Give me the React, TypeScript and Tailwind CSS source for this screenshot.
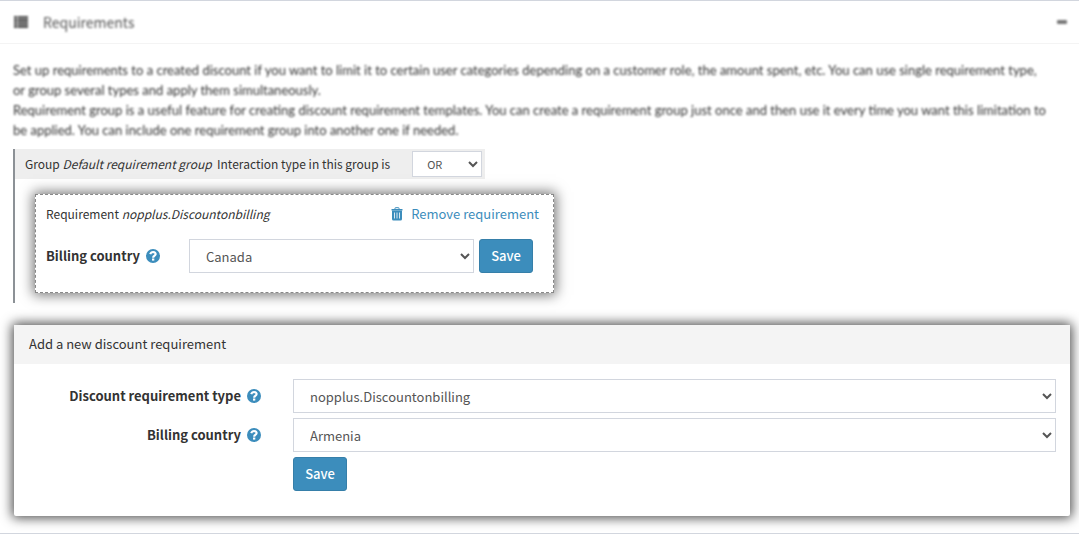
import { useState } from 'react';
import type { ReactNode } from 'react';

const COUNTRIES = ['Armenia', 'Canada', 'Germany', 'United States'];
const REQUIREMENT_TYPES = ['nopplus.Discountonbilling'];

interface SelectProps {
  id: string;
  value: string;
  options: string[];
  onChange: (value: string) => void;
  className: string;
}

function Select({ id, value, options, onChange, className }: SelectProps) {
  return (
    <select
      id={id}
      value={value}
      onChange={(e) => onChange(e.target.value)}
      className={`border border-[#d2d6de] bg-white text-[#555] ${className}`}
    >
      {options.map((option) => (
        <option key={option} value={option}>{option}</option>
      ))}
    </select>
  );
}

function SaveButton() {
  return (
    <button
      type="button"
      className="h-[34px] w-[54px] shrink-0 rounded-[3px] border border-[#367fa9] bg-[#3c8dbc] text-[13px] font-medium text-white"
    >
      Save
    </button>
  );
}

function HelpIcon() {
  return (
    <svg viewBox="0 0 14 14" className="size-3.5 text-[#3c8dbc]" aria-hidden="true">
      <circle cx="7" cy="7" r="7" fill="currentColor" />
      <path d="M4.2 5.2Q5 3 7.1 3 9.600 3.200 9.600 5.100 9.600 6.200 8.200 6.900 7.200 7.400 7.200 8.700" fill="none" stroke="#fff" strokeWidth="2.2" />
      <path d="M6 9.500h2.300v2.100H6z" fill="#fff" />
    </svg>
  );
}

function FieldLabel({ htmlFor, children }: { htmlFor: string; children: ReactNode }) {
  return (
    <label htmlFor={htmlFor} className="flex items-center gap-1.5 font-bold">
      {children}
      <HelpIcon />
    </label>
  );
}

function ListIcon() {
  return (
    <svg viewBox="0 0 14 12" className="h-3 w-3.5 blur-[1px]" aria-hidden="true">
      <path
        d="M0 0h3v2.6H0zM0 3.1h3v2.6H0zM0 6.2h3v2.6H0zM0 9.3h3V12H0zM3.6 0H14v2.6H3.6zM3.6 3.1H14v2.6H3.6zM3.6 6.2H14v2.6H3.6zM3.6 9.3H14V12H3.6z"
        fill="currentColor"
      />
    </svg>
  );
}

function TrashIcon() {
  return (
    <svg viewBox="0 0 12 14" className="h-3.5 w-3" aria-hidden="true">
      <path d="M4 2.5V1.2Q4 .7 4.5 .7h3q.5 0 .5 .5v1.3" fill="none" stroke="currentColor" />
      <path d="M.5 2h11v1.5H.5z" fill="currentColor" />
      <path
        fillRule="evenodd"
        d="M1 3.5h10V12q0 1.5-1.5 1.5h-7Q1 13.5 1 12zM3.2 5.5v6h.8v-6zM5.6 5.5v6h.8v-6zM8 5.5v6h.8v-6z"
        fill="currentColor"
      />
    </svg>
  );
}

export default function App() {
  const [interaction, setInteraction] = useState('OR');
  const [country, setCountry] = useState('Canada');
  const [type, setType] = useState(REQUIREMENT_TYPES[0]);
  const [newCountry, setNewCountry] = useState('Armenia');

  return (
    <div className="border-y border-[#d2d6de] bg-white pb-[17px] font-['Noto_Sans_CJK_SC',sans-serif] text-[13px] leading-5 text-[#333]">
      <header className="flex h-[43px] items-center border-b border-[#f4f4f4] pr-3 pl-3.5 text-[#555]">
        <ListIcon />
        <h2 className="ml-[15px] text-sm blur-[1px]">Requirements</h2>
        <button type="button" aria-label="Collapse" className="ml-auto text-[#777] blur-[1px]">
          <svg viewBox="0 0 10 4" className="h-1 w-2.5" aria-hidden="true">
            <rect width="10" height="4" rx="1" fill="currentColor" />
          </svg>
        </button>
      </header>

      <main className="pt-4 pr-[9px] pl-[13px]">
        <div className="font-[Lato,sans-serif] blur-[1px]">
          <p>
            Set up requirements to a created discount if you want to limit it to certain user categories depending on a
            customer role, the amount spent, etc. You can use single requirement type,
            <br />
            or group several types and apply them simultaneously.
          </p>
          <p>
            Requirement group is a useful feature for creating discount requirement templates. You can create a
            requirement group just once and then use it every time you want this limitation to
            <br />
            be applied. You can include one requirement group into another one if needed.
          </p>
        </div>

        <section className="mt-[9px] border-l-2 border-[#8c9196] pb-2.5">
          <div className="flex h-[30px] w-fit items-center bg-[#eee] pr-[3px] pl-2.5">
            <label htmlFor="interaction" className="text-xs">
              Group <em>Default requirement group</em>&nbsp; Interaction type in this group is
            </label>
            <Select
              id="interaction"
              value={interaction}
              options={['AND', 'OR']}
              onChange={setInteraction}
              className="ml-[22px] h-[26px] w-[70px] pl-2.5 text-[11px]"
            />
          </div>

          <div className="mt-[15px] ml-5 w-[519px] max-w-full border border-dashed border-[#888] pt-[9px] pr-3.5 pb-[19px] pl-2.5 shadow-[0_0_12px_2px_rgba(0,0,0,0.55)]">
            <div className="flex items-center justify-between">
              <span className="text-xs">Requirement <em>nopplus.Discountonbilling</em></span>
              <a href="#remove" className="flex items-center gap-2 text-[#3c8dbc]">
                <TrashIcon />
                Remove requirement
              </a>
            </div>
            <div className="mt-[15px] mr-1.5 flex items-center">
              <div className="w-[143px] shrink-0">
                <FieldLabel htmlFor="country">Billing country</FieldLabel>
              </div>
              <Select
                id="country"
                value={country}
                options={COUNTRIES}
                onChange={setCountry}
                className="mr-[5px] h-[34px] min-w-0 flex-1 pl-3"
              />
              <SaveButton />
            </div>
          </div>
        </section>

        <section className="mt-[22px] ml-px rounded-[2px] shadow-[0_0_12px_2px_rgba(0,0,0,0.7)]">
          <h3 className="bg-[#f4f4f4] px-[15px] pt-[9px] pb-2.5">Add a new discount requirement</h3>
          <div className="flex flex-col gap-[5px] px-3.5 pt-[15px] pb-[25px]">
            <div className="flex items-center">
              <div className="flex w-1/4 justify-end pr-6">
                <FieldLabel htmlFor="requirement-type">Discount requirement type</FieldLabel>
              </div>
              <div className="w-3/4 pl-2">
                <Select
                  id="requirement-type"
                  value={type}
                  options={REQUIREMENT_TYPES}
                  onChange={setType}
                  className="block h-[34px] w-full pl-3"
                />
              </div>
            </div>
            <div className="flex items-center">
              <div className="flex w-1/4 justify-end pr-6">
                <FieldLabel htmlFor="new-country">Billing country</FieldLabel>
              </div>
              <div className="w-3/4 pl-2">
                <Select
                  id="new-country"
                  value={newCountry}
                  options={COUNTRIES}
                  onChange={setNewCountry}
                  className="block h-[34px] w-full pl-3"
                />
              </div>
            </div>
            <div className="ml-[25%] pl-2">
              <SaveButton />
            </div>
          </div>
        </section>
      </main>
    </div>
  );
}
